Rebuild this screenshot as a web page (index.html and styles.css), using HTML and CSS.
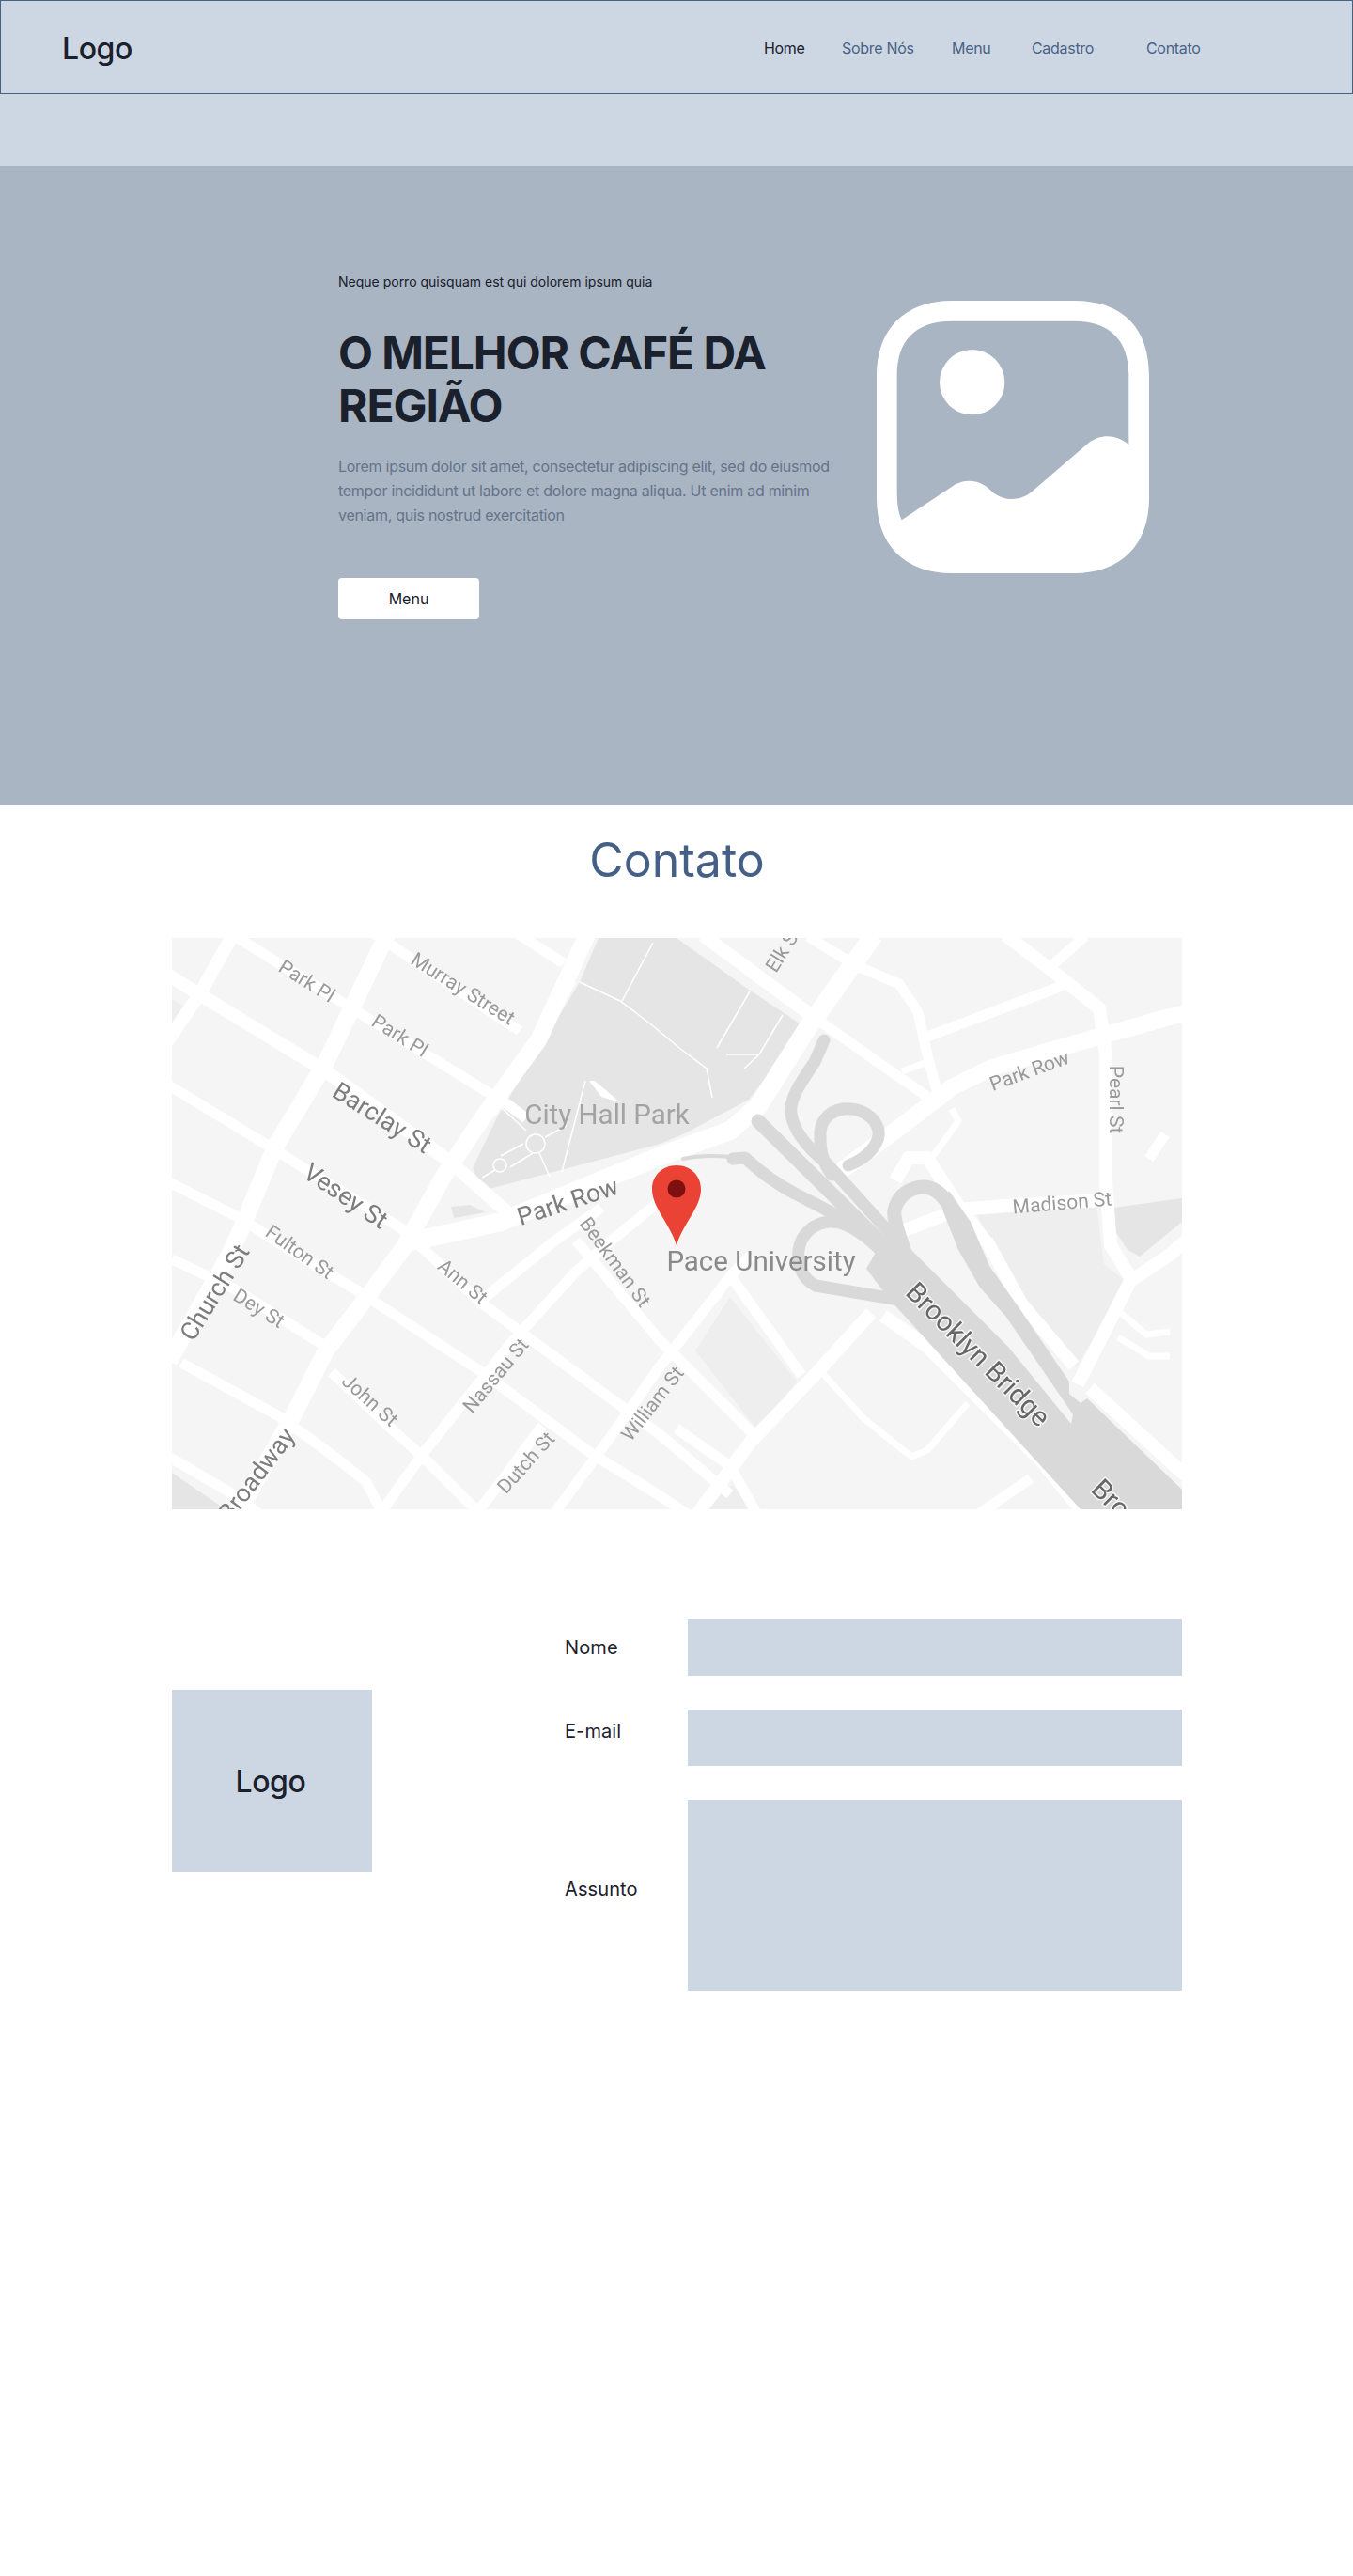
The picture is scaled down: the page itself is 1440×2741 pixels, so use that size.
FILE: index.html
```html
<!DOCTYPE html>
<html lang="pt-BR">
<head>
    <meta charset="UTF-8">
    <meta name="viewport" content="width=device-width, initial-scale=1.0">
    <title>Café</title>
    <link rel="stylesheet" href="styles.css">
</head>
<body>
    <header class="topbar">
        <nav class="navbar">
            <div class="brand">Logo</div>
            <ul class="nav-links">
                <li><a class="active" href="#">Home</a></li>
                <li><a href="#">Sobre Nós</a></li>
                <li><a href="#">Menu</a></li>
                <li><a href="#">Cadastro</a></li>
                <li><a href="#">Contato</a></li>
            </ul>
        </nav>
    </header>

    <section class="hero">
        <div class="hero-text">
            <p class="eyebrow">Neque porro quisquam est qui dolorem ipsum quia</p>
            <h1>O MELHOR CAFÉ DA REGIÃO</h1>
            <p class="lead">Lorem ipsum dolor sit amet, consectetur adipiscing elit, sed do eiusmod tempor incididunt ut labore et dolore magna aliqua. Ut enim ad minim veniam, quis nostrud exercitation</p>
            <a class="hero-button" href="#">Menu</a>
        </div>
        <svg class="hero-image" viewBox="0 0 870 870" aria-hidden="true">
            <path fill-rule="evenodd" d="M240 0H630C790 0 870 90 870 240V630C870 780 780 870 630 870H240C90 870 0 780 0 630V240C0 90 90 0 240 0ZM240 65C120 65 65 130 65 240V610C65 650 70 680 80 700L245 590C285 565 335 570 375 615C410 640 460 640 495 610L675 455C715 425 765 425 805 460V240C805 130 750 65 630 65Z"/>
            <circle cx="305" cy="260" r="104"/>
        </svg>
    </section>

    <section class="contact">
        <h2>Contato</h2>

        <svg class="map" viewBox="183 998 1075 608" role="img" aria-label="Mapa">
            <rect class="land" x="183" y="998" width="1075" height="608"/>

            <!-- quadras e parque -->
            <polygon class="park" points="637,998 720,998 797,1053 857,1093 797,1170 727,1207 703,1217 513,1267 503,1243 530,1187 573,1117 617,1045"/>
            <polygon class="park" points="1185,1285 1258,1275 1258,1300 1213,1337 1200,1330 1187,1310"/>
            <polygon class="park" points="183,1567 240,1606 183,1606"/>
            <polygon class="park" points="480,1284 500,1282 517,1290 483,1296"/>
            <polygon class="block" points="183,1063 197,1072 183,1088"/>
            <polygon class="block" points="740,1437 777,1380 848,1470 807,1523"/>
            <polygon class="block" points="737,1606 780,1580 800,1606"/>
            <polygon class="block" points="1040,1293 1167,1283 1175,1345 1200,1365 1145,1455 1087,1387 1053,1320"/>

            <!-- ruas principais -->
            <g class="roads">
                <polyline class="road-lg" points="627,990 573,1107 513,1190 473,1250 430,1327 393,1377 347,1437 310,1510 253,1610"/>
                <polyline class="road-lg" points="413,992 347,1130 293,1220 257,1307 243,1337 180,1448"/>
                <polyline class="road-xl" points="433,1322 533,1300 703,1230 777,1203 807,1177 860,1093 930,995"/>
                <polyline class="road-lg" points="887,1252 953,1203 1013,1157 1053,1137 1120,1117 1241,1083 1262,1078"/>
                <polyline class="road-md" points="176,1036 347,1140 480,1237 540,1290"/>
                <polyline class="road-md" points="748,995 867,1083"/>
                <polyline class="road-md" points="247,996 213,1057 178,1108"/>
                <polyline class="road-md" points="1070,995 1120,1033 1170,1073 1177,1123 1177,1257 1182,1325 1205,1362"/>
                <polyline class="road-md" points="1147,1473 1203,1363 1245,1335 1262,1320"/>
                <polyline class="road-md" points="1050,1320 1087,1387 1143,1453"/>
                <polyline class="road-md" points="953,1256 967,1232 987,1232 1020,1283 1050,1322"/>
                <polyline class="road-md" points="960,1310 1020,1287 1070,1283 1172,1277"/>
                <polyline class="road-md" points="743,1610 800,1533 870,1460 927,1397"/>
                <polyline class="road-md" points="940,1400 987,1433 1107,1553 1150,1606"/>
                <polyline class="road-md" points="1160,1477 1243,1553 1262,1570"/>

                <polyline class="road-sm" points="240,990 540,1175 560,1190"/>
                <polyline class="road-sm" points="393,990 553,1097"/>
                <polyline class="road-sm" points="545,990 600,1025"/>
                <polyline class="road-sm" points="180,1155 287,1220 427,1307 513,1387 703,1527 777,1590"/>
                <polyline class="road-sm" points="180,1258 257,1297 313,1333 380,1373 513,1460 630,1547 700,1590 730,1610"/>
                <polyline class="road-sm" points="183,1340 247,1370 347,1433"/>
                <polyline class="road-sm" points="193,1450 297,1507 360,1553 390,1577 407,1610"/>
                <polyline class="road-sm" points="353,1460 413,1517 453,1553 510,1610"/>
                <polyline class="road-sm" points="180,1550 243,1587 275,1610"/>
                <polyline class="road-sm" points="405,1610 450,1547 487,1500 543,1430 613,1353 647,1323 700,1280"/>
                <polyline class="road-sm" points="513,1383 587,1323 640,1285"/>
                <polyline class="road-sm" points="507,1610 533,1577 577,1517"/>
                <polyline class="road-sm" points="590,1610 647,1533 700,1457 780,1355 800,1335"/>
                <polyline class="road-sm" points="613,1320 703,1427 803,1527 777,1560"/>
                <polyline class="road-sm" points="720,1520 777,1560 805,1610"/>
                <polyline class="road-sm" points="777,1357 853,1463"/>
                <polyline class="road-sm" points="867,1083 987,1167"/>
                <polyline class="road-sm" points="860,996 910,1027 957,1047 977,1077 987,1123 997,1160"/>
                <polyline class="road-sm" points="987,1103 1120,1053 1133,1047"/>
                <polyline class="road-sm" points="1155,996 1120,1027"/>
                <polyline class="road-sm" points="1097,1573 1043,1610"/>
                <polyline class="road-sm" points="1240,1207 1223,1233"/>
                <polyline class="road-xs" points="1193,1397 1220,1420 1245,1417"/>
                <polyline class="road-xs" points="1190,1423 1223,1443 1245,1443"/>
                <polyline class="road-xs" points="877,1463 920,1510 970,1550 987,1543 1030,1493"/>
                <polyline class="road-xs" points="960,1140 987,1130"/>
                <polyline class="road-xs" points="1013,1180 1020,1193 993,1230"/>
            </g>

            <!-- caminhos do parque -->
            <g class="paths">
                <polyline points="617,1045 660,1065 693,1090 723,1115 752,1137 758,1168"/>
                <polyline points="662,1065 695,1003"/>
                <polyline points="798,1055 763,1115"/>
                <polyline points="833,1080 808,1122 792,1137"/>
                <polyline points="773,1122 807,1122"/>
                <polyline points="527,1187 613,1045"/>
                <polyline points="533,1178 560,1203"/>
                <polyline points="513,1253 527,1245"/>
                <polyline points="533,1230 557,1217"/>
                <polyline points="543,1242 567,1227"/>
                <polyline points="580,1210 603,1198"/>
                <polyline points="574,1227 585,1252"/>
                <polyline points="623,1150 598,1247"/>
                <circle cx="570" cy="1217" r="10"/>
                <circle cx="532" cy="1240" r="7"/>
            </g>
            <polygon class="fountain" points="627,1150 633,1150 660,1173 640,1167"/>

            <!-- ponte e rampas -->
            <g class="bridge">
                <path class="ramp" d="M877 1107L867 1130C850 1155 840 1170 842 1185C845 1205 860 1222 880 1238L957 1323"/>
                <path class="ramp-wide" d="M807 1193L953 1337"/>
                <path class="ramp" d="M903 1240C925 1232 937 1215 935 1203C932 1188 915 1178 897 1180C880 1183 872 1195 873 1210C873 1225 875 1235 885 1250"/>
                <path class="ramp" d="M780 1233L793 1232C810 1248 830 1262 850 1272C880 1287 900 1298 930 1315"/>
                <path class="ramp" d="M950 1345C930 1320 905 1300 885 1300C865 1300 852 1315 850 1330C848 1345 853 1360 868 1368L957 1383"/>
                <path class="ramp-wide" d="M965 1340C960 1320 950 1300 952 1288C955 1272 970 1262 985 1263C1000 1265 1010 1280 1016 1295"/>
                <path class="ramp-thin" d="M727 1233C745 1229 770 1229 787 1233"/>
                <polygon points="1010,1267 1033,1300 1053,1347 1087,1395 1138,1470 1138,1483 1150,1493 1157,1488 1258,1585 1258,1606 1150,1606 1108,1560 947,1383 922,1350 945,1310 965,1325 1073,1433 1140,1515 1142,1505 1070,1400 1043,1370 1020,1330 1003,1287"/>
            </g>

            <!-- nomes -->
            <g class="labels">
                <text class="small" transform="translate(323 1050) rotate(32)">Park Pl</text>
                <text class="small" transform="translate(422 1108) rotate(32)">Park Pl</text>
                <text class="small" transform="translate(489 1058) rotate(32)">Murray Street</text>
                <text class="big" transform="translate(402 1197) rotate(32)">Barclay St</text>
                <text class="big" transform="translate(363 1280) rotate(34)">Vesey St</text>
                <text class="big" transform="translate(607 1287) rotate(-18)">Park Row</text>
                <text class="small" transform="translate(649 1347) rotate(54)">Beekman St</text>
                <text class="small" transform="translate(315 1338) rotate(35)">Fulton St</text>
                <text class="big" transform="translate(236 1380) rotate(-58)">Church St</text>
                <text class="small" transform="translate(272 1398) rotate(32)">Dey St</text>
                <text class="small" transform="translate(488 1369) rotate(40)">Ann St</text>
                <text class="small" transform="translate(533 1468) rotate(-50)">Nassau St</text>
                <text class="small" transform="translate(389 1495) rotate(42)">John St</text>
                <text class="big" text-anchor="end" transform="translate(315 1528) rotate(-53)">Broadway</text>
                <text class="small" transform="translate(565 1561) rotate(-48)">Dutch St</text>
                <text class="small" transform="translate(700 1498) rotate(-52)">William St</text>
                <text class="small" text-anchor="start" transform="translate(826 1036) rotate(-58)">Elk St</text>
                <text class="small" transform="translate(1098 1146) rotate(-20)">Park Row</text>
                <text class="small" transform="translate(1181 1170) rotate(90)">Pearl St</text>
                <text class="small" transform="translate(1131 1287) rotate(-5)">Madison St</text>
                <text class="place-light" x="646" y="1196">City Hall Park</text>
                <text class="place" x="810" y="1352">Pace University</text>
                <text class="bridge-name" transform="translate(1034 1448) rotate(45)">Brooklyn Bridge</text>
                <text class="bridge-name" text-anchor="start" transform="translate(1160 1586) rotate(45)">Brooklyn Bridge</text>
            </g>

            <path class="pin" d="M720 1240C705 1240 694 1251 694 1265C694 1285 712 1300 720 1325C728 1300 746 1285 746 1265C746 1251 735 1240 720 1240Z"/>
            <circle class="pin-dot" cx="720" cy="1265" r="9.5"/>
        </svg>

        <div class="contact-body">
            <div class="contact-logo">Logo</div>
            <form class="contact-form">
                <div class="form-row">
                    <label for="nome">Nome</label>
                    <input type="text" id="nome">
                </div>
                <div class="form-row raised">
                    <label for="email">E-mail</label>
                    <input type="email" id="email">
                </div>
                <div class="form-row raised">
                    <label for="assunto">Assunto</label>
                    <textarea id="assunto"></textarea>
                </div>
            </form>
        </div>
    </section>
</body>
</html>
```

FILE: styles.css
```css
* {
    box-sizing: border-box;
}

body {
    margin: 0;
    font-family: Inter, "Noto Sans", sans-serif;
    color: #1a202c;
    background: #fff;
}

/* Header */
.topbar {
    height: 177px;
    background-color: #cdd7e3;
}

.navbar {
    height: 100px;
    padding: 2px 0 0 65px;
    border: 1px solid #476085;
    display: flex;
    align-items: center;
}

.brand {
    font-size: 32px;
    font-weight: 500;
    letter-spacing: -0.4px;
}

.nav-links {
    list-style: none;
    margin: 0 0 0 672px;
    padding: 0;
    display: grid;
    grid-template-columns: 83px 117px 85px 122px auto;
    font-size: 16px;
    letter-spacing: -0.3px;
}

.nav-links a {
    color: #4a6285;
    text-decoration: none;
}

.nav-links a.active {
    color: #1a202c;
}

/* Hero */
.hero {
    height: 680px;
    padding: 113px 0 0 360px;
    background-color: #a9b5c3;
    display: flex;
    align-items: flex-start;
    gap: 49px;
}

.hero-text {
    width: 524px;
    flex-shrink: 0;
}

.eyebrow {
    margin: 0 0 38px;
    font-size: 14px;
    line-height: 20px;
}

.hero h1 {
    margin: 0 0 23px;
    font-size: 48px;
    line-height: 56px;
    font-weight: 700;
    letter-spacing: -1.1px;
}

.lead {
    margin: 0 0 54px;
    font-size: 16px;
    line-height: 26px;
    letter-spacing: -0.28px;
    color: #667389;
}

.hero-button {
    display: flex;
    align-items: center;
    justify-content: center;
    width: 150px;
    height: 44px;
    border-radius: 4px;
    background: #fff;
    color: #1a202c;
    font-size: 16px;
    text-decoration: none;
}

.hero-image {
    width: 290px;
    height: 290px;
    margin-top: 30px;
    fill: #fff;
}

/* Contato */
.contact {
    padding: 28px 182px 0 183px;
}

.contact h2 {
    margin: 0 0 53px;
    text-align: center;
    font-size: 50px;
    line-height: 60px;
    font-weight: 400;
    color: #456086;
}

.map {
    display: block;
    width: 1075px;
    height: 608px;
    filter: blur(0.7px);
}

.land {
    fill: #f5f5f5;
}

.park {
    fill: #e5e5e5;
}

.block {
    fill: #eeeeee;
}

.roads polyline {
    fill: none;
    stroke: #fff;
    stroke-linejoin: round;
}

.road-xl { stroke-width: 20px; }
.road-lg { stroke-width: 18px; }
.road-md { stroke-width: 14px; }
.road-sm { stroke-width: 11px; }
.road-xs { stroke-width: 7px; }

.paths polyline,
.paths circle {
    fill: none;
    stroke: #fff;
    stroke-width: 1.5px;
}

.fountain {
    fill: #fff;
}

.bridge {
    fill: #d9d9d9;
}

.bridge path {
    fill: none;
    stroke: #d9d9d9;
    stroke-linejoin: round;
    stroke-linecap: round;
}

.ramp { stroke-width: 13px; }
.ramp-wide { stroke-width: 15px; }
.ramp-thin { stroke-width: 4px; }

.labels text {
    font-family: Roboto, sans-serif;
    text-anchor: middle;
}

.labels text[text-anchor="start"] { text-anchor: start; }
.labels text[text-anchor="end"] { text-anchor: end; }

.small {
    font-size: 21px;
    fill: #9a9a9a;
}

.big {
    font-size: 26.5px;
    fill: #7d7d7d;
}

.place-light {
    font-size: 29.5px;
    fill: #a3a3a3;
}

.place {
    font-size: 29.5px;
    fill: #8a8a8a;
}

.bridge-name {
    font-size: 29px;
    fill: #666;
    stroke: #f5f5f5;
    stroke-width: 3px;
    paint-order: stroke;
}

.pin {
    fill: #ea4335;
}

.pin-dot {
    fill: #7e1010;
}

/* Form */
.contact-body {
    margin-top: 117px;
    display: flex;
    align-items: flex-start;
}

.contact-logo {
    width: 213px;
    height: 194px;
    margin-top: 75px;
    margin-right: 205px;
    padding-right: 3px;
    background-color: #cdd7e3;
    font-size: 32px;
    font-weight: 500;
    letter-spacing: -0.4px;
    display: flex;
    align-items: center;
    justify-content: center;
}

.contact-form {
    width: 657px;
    display: flex;
    flex-direction: column;
    gap: 36px;
}

.form-row {
    display: grid;
    grid-template-columns: 131px 526px;
    align-items: center;
}

.form-row label {
    font-size: 20px;
    letter-spacing: 0.1px;
}

.form-row.raised label {
    padding-bottom: 14px;
}

.form-row input,
.form-row textarea {
    display: block;
    width: 100%;
    border: none;
    border-radius: 0;
    background-color: #cdd7e3;
    resize: none;
}

.form-row input {
    height: 60px;
}

.form-row textarea {
    height: 203px;
}
```
